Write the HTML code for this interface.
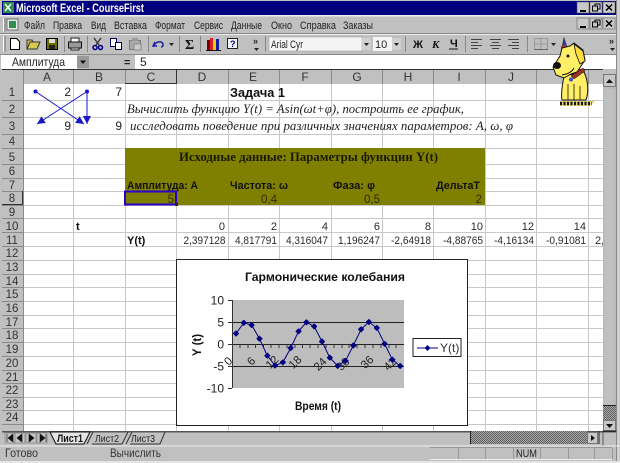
<!DOCTYPE html>
<html><head><meta charset="utf-8"><title>Microsoft Excel - CourseFirst</title>
<style>
html,body{margin:0;padding:0;background:#c0c0c0;width:620px;height:463px;overflow:hidden}
svg{display:block;font-family:"Liberation Sans",sans-serif;filter:blur(.35px)}
.c{font-size:10px;fill:#2a2a2a}
.r{font-size:10px;fill:#2a2a2a;text-anchor:end}
.b{font-size:11px;font-weight:bold;fill:#111}
.h{font-size:12px;fill:#333;text-anchor:middle}
.n{font-size:11.5px;fill:#333;text-anchor:middle}
.m{font-size:11px;fill:#222}
.s{font-family:"Liberation Serif",serif;font-style:italic;font-size:13px;fill:#222}
.t{font-size:12px;fill:#222;text-anchor:end}
</style></head><body>
<svg width="620" height="463" viewBox="0 0 620 463" xmlns="http://www.w3.org/2000/svg">
<defs>
<marker id="dot" markerWidth="6" markerHeight="6" refX="3" refY="3" markerUnits="userSpaceOnUse"><path d="M3 .3L5.700 3 3 5.700 .3 3z" fill="#000080" stroke="#000080" stroke-width=".8"/></marker>
<marker id="arr" markerWidth="10" markerHeight="10" refX="8" refY="4" orient="auto" markerUnits="userSpaceOnUse"><path d="M0 0L8 4 0 8z" fill="#1818c8"/></marker>
<pattern id="dith" width="2" height="2" patternUnits="userSpaceOnUse"><rect width="2" height="2" fill="#a8a8a8"/><rect width="1" height="1" fill="#606060"/><rect x="1" y="1" width="1" height="1" fill="#606060"/></pattern>
</defs>
<rect width="620" height="463" fill="#c0c0c0"/>

<!-- Title bar -->
<rect x="2" y="1" width="614" height="14" fill="#000080"/>
<rect x="3" y="2" width="11" height="11" fill="#2f8f4f"/><path d="M5 4l6 7M11 4l-6 7" stroke="#fff" stroke-width="1.400"/>
<text x="16" y="12" font-size="12" font-weight="bold" fill="#fff" textLength="128" lengthAdjust="spacingAndGlyphs">Microsoft Excel - CourseFirst</text>
<g id="tb">
<rect x="577" y="2" width="12" height="11" fill="#c8c8c8" stroke="#555" stroke-width=".5"/><rect x="580" y="10" width="6" height="2" fill="#000"/>
<rect x="590" y="2" width="12" height="11" fill="#c8c8c8" stroke="#555" stroke-width=".5"/><path d="M592.500 6h5v5h-5zM595 6V4h5v5h-2" fill="none" stroke="#000"/>
<rect x="603" y="2" width="12" height="11" fill="#c8c8c8" stroke="#555" stroke-width=".5"/><path d="M606 4.500l6 6M612 4.500l-6 6" stroke="#000" stroke-width="1.500"/>
</g>
<rect x="0" y="15" width="620" height="1.500" fill="#eee"/>

<!-- Menu -->
<rect x="3" y="18" width="1" height="14" fill="#fff"/><rect x="4.500" y="18" width="1" height="14" fill="#777"/>
<rect x="7" y="19" width="11" height="11" fill="#e8e8e8" stroke="#444" stroke-width=".7"/><rect x="9" y="21" width="7" height="7" fill="#2f8f4f"/>
<text class="m" y="29" x="24" textLength="21" lengthAdjust="spacingAndGlyphs">Файл</text>
<text class="m" y="29" x="53" textLength="29" lengthAdjust="spacingAndGlyphs">Правка</text>
<text class="m" y="29" x="91" textLength="15" lengthAdjust="spacingAndGlyphs">Вид</text>
<text class="m" y="29" x="114" textLength="33" lengthAdjust="spacingAndGlyphs">Вставка</text>
<text class="m" y="29" x="155" textLength="30" lengthAdjust="spacingAndGlyphs">Формат</text>
<text class="m" y="29" x="194" textLength="29" lengthAdjust="spacingAndGlyphs">Сервис</text>
<text class="m" y="29" x="231" textLength="31" lengthAdjust="spacingAndGlyphs">Данные</text>
<text class="m" y="29" x="271" textLength="21" lengthAdjust="spacingAndGlyphs">Окно</text>
<text class="m" y="29" x="300" textLength="36" lengthAdjust="spacingAndGlyphs">Справка</text>
<text class="m" y="29" x="343" textLength="30" lengthAdjust="spacingAndGlyphs">Заказы</text>
<use href="#tb" y="16"/>
<rect x="0" y="33" width="620" height="1" fill="#888"/><rect x="0" y="34" width="620" height="1" fill="#eee"/>

<!-- Toolbar -->
<rect x="3" y="36" width="1" height="16" fill="#fff"/><rect x="4.500" y="36" width="1" height="16" fill="#777"/>
<path d="M10.500 38.500h6l3 3v8h-9z" fill="#fff" stroke="#000"/>
<path d="M27 49l3-7h10l-3 7zM27 49v-9h5l1 2" fill="#d8c850" stroke="#333"/>
<rect x="46.500" y="38.500" width="11" height="11" fill="#707000" stroke="#000"/><rect x="49" y="39" width="6" height="4" fill="#ddd"/><rect x="49" y="45" width="6" height="4" fill="#222"/>
<rect x="64" y="36" width="1" height="16" fill="#888"/>
<path d="M71 42v-4h8v4" fill="#fff" stroke="#222"/><rect x="68.500" y="42" width="13" height="6" fill="#999" stroke="#111"/><path d="M71 48h8v2h-8z" fill="#eee" stroke="#222"/>
<rect x="87" y="36" width="1" height="16" fill="#888"/>
<path d="M94 38l5 7M101 38l-5 7" stroke="#333" stroke-width="1.300"/><circle cx="95" cy="47.500" r="2" fill="none" stroke="#00008a" stroke-width="1.500"/><circle cx="100.500" cy="47.500" r="2" fill="none" stroke="#00008a" stroke-width="1.500"/>
<rect x="110.500" y="38.500" width="6" height="8" fill="#fff" stroke="#00005a"/><rect x="115.500" y="42.500" width="6" height="7" fill="#fff" stroke="#00005a"/>
<rect x="129.500" y="40.500" width="11" height="9" fill="#aaa" stroke="#777"/><rect x="132" y="38" width="6" height="3" fill="#999"/><rect x="134" y="44" width="7" height="6" fill="#ccc" stroke="#888"/>
<rect x="148" y="36" width="1" height="16" fill="#888"/>
<path d="M155 42l-2 4 4 0M154 45c3-4 8-4 9-1 .5 2-1 3-2 3" fill="none" stroke="#2020a0" stroke-width="1.500"/>
<path d="M169 43h5l-2.500 3z" fill="#222"/>
<rect x="179" y="36" width="1" height="16" fill="#888"/>
<text x="185" y="49" font-size="14" font-weight="bold" fill="#111" font-family="Liberation Serif">Σ</text>
<rect x="200" y="36" width="1" height="16" fill="#888"/>
<rect x="207" y="40" width="3" height="10" fill="#700"/><rect x="210" y="38" width="3" height="12" fill="#e02020"/><rect x="213" y="41" width="3" height="9" fill="#f0d000"/><rect x="216" y="39" width="3" height="11" fill="#1020a0"/><path d="M206 50.500h15" stroke="#111"/>
<rect x="227.500" y="38.500" width="10" height="10" fill="#f4f4f4" stroke="#222"/><text x="230" y="47" font-size="9" font-weight="bold" fill="#000080">?</text>
<text x="253" y="44" font-size="9" font-weight="bold" fill="#222">»</text><path d="M254 48h5l-2.500 3z" fill="#222"/>
<rect x="265" y="36" width="1" height="16" fill="#888"/>
<rect x="269" y="37" width="93" height="14" fill="#f4f4f4" stroke="#999" stroke-width=".5"/>
<text x="271" y="48" font-size="11" fill="#222" textLength="32" lengthAdjust="spacingAndGlyphs">Arial Cyr</text>
<rect x="362" y="38" width="9" height="12" fill="#d0d0d0"/><path d="M364 43h5l-2.500 3z" fill="#222"/>
<rect x="373" y="37" width="19" height="14" fill="#f4f4f4"/><text x="375" y="48" font-size="11" fill="#222">10</text>
<rect x="392" y="38" width="9" height="12" fill="#d0d0d0"/><path d="M394 43h5l-2.500 3z" fill="#222"/>
<rect x="405" y="36" width="1" height="16" fill="#888"/>
<text x="413" y="48" font-size="11" font-weight="bold" fill="#111">Ж</text>
<text x="432" y="48" font-size="11" font-weight="bold" font-style="italic" fill="#111" font-family="Liberation Serif">К</text>
<text x="450" y="47" font-size="11" font-weight="bold" fill="#111">Ч</text><rect x="449" y="48.500" width="9" height="1" fill="#111"/>
<rect x="465" y="36" width="1" height="16" fill="#888"/>
<path d="M471 39.500h11M471 42.500h7M471 45.500h11M471 48.500h7" stroke="#444"/>
<path d="M490 39.500h11M492 42.500h7M490 45.500h11M492 48.500h7" stroke="#444"/>
<path d="M508 39.500h11M512 42.500h7M508 45.500h11M512 48.500h7" stroke="#444"/>
<rect x="527" y="36" width="1" height="16" fill="#888"/>
<path d="M534.500 38.500h13v11h-13zM541 38v12M534 44h14" fill="none" stroke="#999"/><path d="M534 49.500h14" stroke="#666"/>
<path d="M551 43h5l-2.500 3z" fill="#222"/>
<text x="609" y="44" font-size="9" font-weight="bold" fill="#222">»</text><path d="M610 48h5l-2.500 3z" fill="#222"/>

<!-- Formula bar -->
<rect x="0" y="54" width="620" height="1" fill="#888"/>
<rect x="1" y="55" width="76" height="14" fill="#fff"/>
<text x="12" y="66" font-size="12" fill="#222" textLength="53" lengthAdjust="spacingAndGlyphs">Амплитуда</text>
<rect x="77" y="56" width="12" height="12" fill="#999"/><path d="M80 60.500h6l-3 3.500z" fill="#111"/>
<rect x="135" y="55" width="481" height="14" fill="#fff"/>
<text x="124" y="66" font-size="11" font-weight="bold" fill="#222">=</text>
<text x="140" y="66" font-size="12" fill="#222">5</text>

<!-- Sheet -->
<rect x="2" y="69" width="601" height="1.500" fill="#333"/>
<rect x="23" y="84" width="580" height="348" fill="#fff"/>
<rect x="2" y="70" width="601" height="14" fill="#c0c0c0"/>
<rect x="2" y="84" width="21" height="348" fill="#c0c0c0"/>
<path d="M73.500 84V432M125.500 84V432M176.500 84V432M228.500 84V432M279.500 84V432M331.500 84V432M382.500 84V432M433.500 84V432M485.500 84V432M536.500 84V432M588.500 84V432M23 100.500H603M23 117.500H603M23 134.500H603M23 148.500H603M23 164.500H603M23 178.500H603M23 191.500H603M23 205.500H603M23 218.500H603M23 232.500H603M23 246.500H603M23 260.500H603M23 274.500H603M23 287.500H603M23 301.500H603M23 315.500H603M23 328.500H603M23 342.500H603M23 356.500H603M23 370.500H603M23 383.500H603M23 397.500H603M23 410.500H603M23 424.500H603" stroke="#c8c8c8" stroke-width="1" fill="none"/>
<path d="M23.500 70V84M73.500 70V84M125.500 70V84M176.500 70V84M228.500 70V84M279.500 70V84M331.500 70V84M382.500 70V84M433.500 70V84M485.500 70V84M536.500 70V84M588.500 70V84M2 100.500H23M2 117.500H23M2 134.500H23M2 148.500H23M2 164.500H23M2 178.500H23M2 191.500H23M2 205.500H23M2 218.500H23M2 232.500H23M2 246.500H23M2 260.500H23M2 274.500H23M2 287.500H23M2 301.500H23M2 315.500H23M2 328.500H23M2 342.500H23M2 356.500H23M2 370.500H23M2 383.500H23M2 397.500H23M2 410.500H23M2 424.500H23M23.500 84V432" stroke="#8a8a8a" fill="none"/>
<path d="M125 83.500H177M176.500 70V84M2 204.500H23M22.500 191V205" stroke="#333" stroke-width="1" fill="none"/>
<text class="h" x="47" y="81">A</text><text class="h" x="99" y="81">B</text><text class="h" x="151" y="81">C</text><text class="h" x="202" y="81">D</text><text class="h" x="253" y="81">E</text><text class="h" x="305" y="81">F</text><text class="h" x="357" y="81">G</text><text class="h" x="408" y="81">H</text><text class="h" x="459" y="81">I</text><text class="h" x="511" y="81">J</text>
<g>
<text class="n" x="12" y="96">1</text><text class="n" x="12" y="113">2</text><text class="n" x="12" y="130">3</text><text class="n" x="12" y="145">4</text><text class="n" x="12" y="161">5</text><text class="n" x="12" y="175">6</text><text class="n" x="12" y="189">7</text><text class="n" x="12" y="202">8</text><text class="n" x="12" y="216">9</text><text class="n" x="12" y="230">10</text><text class="n" x="12" y="244">11</text><text class="n" x="12" y="257">12</text><text class="n" x="12" y="271">13</text><text class="n" x="12" y="285">14</text><text class="n" x="12" y="298">15</text><text class="n" x="12" y="312">16</text><text class="n" x="12" y="326">17</text><text class="n" x="12" y="339">18</text><text class="n" x="12" y="353">19</text><text class="n" x="12" y="367">20</text><text class="n" x="12" y="381">21</text><text class="n" x="12" y="394">22</text><text class="n" x="12" y="408">23</text><text class="n" x="12" y="421">24</text>
</g>

<!-- Olive block -->
<rect x="125" y="148" width="360" height="57" fill="#808000"/>
<text x="179" y="161" font-family="Liberation Serif" font-weight="bold" font-size="13" fill="#1a1a00" textLength="259" lengthAdjust="spacingAndGlyphs">Исходные данные: Параметры функции Y(t)</text>
<text class="b" x="127" y="189" textLength="71" lengthAdjust="spacingAndGlyphs">Амплитуда: А</text>
<text class="b" x="230" y="189" textLength="58" lengthAdjust="spacingAndGlyphs">Частота: ω</text>
<text class="b" x="333" y="189" textLength="42" lengthAdjust="spacingAndGlyphs">Фаза: φ</text>
<text class="b" x="436" y="189" textLength="44" lengthAdjust="spacingAndGlyphs">ДельтаТ</text>
<g font-size="11.500" text-anchor="end" fill="#2c2c00">
<text x="174" y="203">5</text><text x="277" y="203">0,4</text><text x="380" y="203">0,5</text><text x="482" y="203">2</text>
</g>
<rect x="125" y="191.500" width="51" height="13" fill="none" stroke="#2a00c8" stroke-width="2"/>
<rect x="175" y="203" width="3" height="3" fill="#222"/>

<!-- Cells -->
<text x="230" y="97" font-size="13" font-weight="bold" fill="#111" textLength="55" lengthAdjust="spacingAndGlyphs">Задача 1</text>
<text class="s" x="127" y="113" textLength="337" lengthAdjust="spacingAndGlyphs">Вычислить функцию Y(t) = Asin(ωt+φ), построить ее график,</text>
<text class="s" x="130" y="130" textLength="383" lengthAdjust="spacingAndGlyphs">исследовать поведение при различных значениях параметров: A, ω, φ</text>
<text class="t" x="71" y="96">2</text><text class="t" x="122" y="96">7</text><text class="t" x="71" y="130">9</text><text class="t" x="122" y="130">9</text>
<g stroke="#1818c8" stroke-width="1" fill="none">
<path d="M35.500 91.500L84 124" marker-end="url(#arr)"/><path d="M87 91.500L37 124" marker-end="url(#arr)"/><path d="M87 91.500V124" marker-end="url(#arr)"/>
</g>
<circle cx="35.500" cy="91.500" r="2" fill="#1818c8"/><circle cx="87" cy="91.500" r="2" fill="#1818c8"/>
<text class="b" x="76" y="230">t</text>
<g font-size="11" text-anchor="end" fill="#2a2a2a">
<text x="225" y="230">0</text><text x="277" y="230">2</text><text x="328" y="230">4</text><text x="380" y="230">6</text><text x="431" y="230">8</text><text x="483" y="230">10</text><text x="534" y="230">12</text><text x="586" y="230">14</text>
</g>
<text class="b" x="127" y="244">Y(t)</text>
<text class="r" x="225.500" y="244" textLength="42" lengthAdjust="spacingAndGlyphs" style="font-size:11px">2,397128</text><text class="r" x="277" y="244" textLength="42" lengthAdjust="spacingAndGlyphs" style="font-size:11px">4,817791</text><text class="r" x="328" y="244" textLength="42" lengthAdjust="spacingAndGlyphs" style="font-size:11px">4,316047</text><text class="r" x="380" y="244" textLength="42" lengthAdjust="spacingAndGlyphs" style="font-size:11px">1,196247</text><text class="r" x="431" y="244" textLength="40" lengthAdjust="spacingAndGlyphs" style="font-size:11px">-2,64918</text><text class="r" x="483" y="244" textLength="40" lengthAdjust="spacingAndGlyphs" style="font-size:11px">-4,88765</text><text class="r" x="534" y="244" textLength="40" lengthAdjust="spacingAndGlyphs" style="font-size:11px">-4,16134</text><text class="r" x="586" y="244" textLength="40" lengthAdjust="spacingAndGlyphs" style="font-size:11px">-0,91081</text>
<text class="c" x="595" y="244" style="font-size:11px">2,</text>

<!-- Chart -->
<rect x="176.500" y="259.500" width="291" height="166" fill="#fff" stroke="#222"/>
<text x="245" y="281" font-size="12" font-weight="bold" fill="#111" textLength="160" lengthAdjust="spacingAndGlyphs">Гармонические колебания</text>
<rect x="232" y="300" width="172" height="88" fill="#bdbdbd"/>
<path d="M232 322.500H404M232 344.500H404M232 366.500H404" stroke="#222"/>
<path d="M232.500 300V388M228 300.500H232M228 322.500H232M228 344.500H232M228 366.500H232M228 388.500H232M240 344V348M248 344V348M255.500 344V348M263.500 344V348M271 344V348M279 344V348M287 344V348M295 344V348M302.500 344V348M310 344V348M318 344V348M326 344V348M334 344V348M342 344V348M349 344V348M357 344V348M365 344V348M373 344V348M381 344V348M389 344V348M396 344V348" stroke="#333" fill="none"/>
<g font-size="12" fill="#222" text-anchor="end"><text x="224" y="304.500">10</text><text x="224" y="326.500">5</text><text x="224" y="348.500">0</text><text x="224" y="370.500">-5</text><text x="224" y="392.500">-10</text></g>
<g font-size="11.500" fill="#222" text-anchor="middle">
<text transform="rotate(-45 228 361)" x="228" y="365">0</text>
<text transform="rotate(-45 251 361)" x="251" y="365">6</text>
<text transform="rotate(-45 272 362)" x="272" y="366">12</text>
<text transform="rotate(-45 295 362)" x="295" y="366">18</text>
<text transform="rotate(-45 320 364)" x="320" y="368">24</text>
<text transform="rotate(-45 343 364)" x="343" y="368">30</text>
<text transform="rotate(-45 367 362)" x="367" y="366">36</text>
<text transform="rotate(-45 390 364)" x="390" y="368">42</text>
</g>
<polyline fill="none" stroke="#000080" stroke-width="1" marker-start="url(#dot)" marker-mid="url(#dot)" marker-end="url(#dot)" points="236,333.500 243.800,322.800 251.600,325 259.500,338.700 267.300,355.700 275.100,365.500 282.900,362.300 290.700,348 298.600,331.300 306.400,322.300 314.200,326.400 322,341.500 329.800,357.700 337.700,365.900 345.500,360.800 353.300,345.500 361.100,329.300 368.900,322 376.800,327.900 384.600,343.800 392.400,359.700 400.200,366"/>
<text transform="rotate(-90 201 345)" x="201" y="345" text-anchor="middle" font-size="11.500" font-weight="bold" fill="#111">Y (t)</text>
<text x="295" y="410" font-size="11.500" font-weight="bold" fill="#111" textLength="46" lengthAdjust="spacingAndGlyphs">Время (t)</text>
<rect x="413" y="338.500" width="48" height="18" fill="#fff" stroke="#222"/>
<path d="M417 348H438" stroke="#000080"/><path d="M427.500 345L430.500 348 427.500 351 424.500 348z" fill="#000080"/>
<text x="440" y="352" font-size="12" fill="#333">Y(t)</text>

<!-- Dog -->
<path d="M561 52L564 38 568 50z" fill="#3a3ab0" stroke="#222" stroke-width=".6"/><path d="M561 46l5-1 1 4-6 1z" fill="#c03030"/>
<path d="M564 76C562 86 561 95 562 100H586C589 92 588 80 584 72z" fill="#ffee66" stroke="#111" stroke-width="1"/>
<path d="M568 84V100M574 84V100M580 86V100" stroke="#111" stroke-width=".8" fill="none"/>
<path d="M560 101H595L590 106H561z" fill="#e8d878"/>
<path d="M560 103.500H592" stroke="#111" stroke-width="3.500" stroke-dasharray="2 1.500"/>
<path d="M553 67L560 56 562 48 570 46 574 43 583 50 585 60 581 66 577 72 571 74 564 78 556 75z" fill="#ffee66" stroke="#111" stroke-width="1"/>
<path d="M574 44L583 51 585 61 580 64 576 54z" fill="#ffdc40" stroke="#111" stroke-width=".8"/>
<ellipse cx="557" cy="65.500" rx="4" ry="3.500" fill="#111"/><circle cx="568" cy="56" r="1.500" fill="#111"/>
<path d="M562 75C568 74 572 72 574 68" fill="none" stroke="#111"/>
<path d="M571 76L583 68 585 71 574 79z" fill="#a03020" stroke="#111" stroke-width=".5"/>
<circle cx="571" cy="79.500" r="2" fill="#3050d0"/>

<!-- Vertical scrollbar -->
<rect x="603" y="70" width="14" height="361" fill="#c0c0c0"/>
<rect x="603.500" y="74.500" width="12" height="12" fill="#c8c8c8" stroke="#777"/><path d="M606 83h7l-3.500-4z" fill="#111"/>
<rect x="604" y="88" width="11" height="317" fill="#c0c0c0" stroke="#aaa" stroke-width=".5"/>
<rect x="603" y="405" width="13" height="15" fill="url(#dith)"/><rect x="603" y="405" width="13" height="1" fill="#222"/>
<rect x="603.500" y="420.500" width="12" height="10" fill="#c8c8c8" stroke="#777"/><path d="M606 424h7l-3.500 4z" fill="#111"/>
<rect x="616" y="0" width="1" height="463" fill="#888"/><rect x="617" y="0" width="3" height="463" fill="#d0d0d0"/>

<!-- Tabs row -->
<rect x="0" y="431" width="616" height="15" fill="#c0c0c0"/>
<rect x="2" y="431" width="601" height="1.500" fill="#555"/>
<g fill="#c4c4c4" stroke="#777" stroke-width=".6">
<rect x="5" y="433" width="10" height="10"/><rect x="15" y="433" width="10" height="10"/><rect x="26" y="433" width="10" height="10"/><rect x="37" y="433" width="10" height="10"/>
</g>
<path d="M7 434v8M13 434l-5 4 5 4zM22 434l-5 4 5 4zM29 434l5 4-5 4zM40 434l5 4-5 4zM46 434v8" fill="#111" stroke="#111" stroke-width=".6"/>
<path d="M50 432L56 444H84L90 432z" fill="#e4e4e4" stroke="#111"/>
<text x="57" y="442" font-size="11" font-weight="bold" fill="#111" textLength="26" lengthAdjust="spacingAndGlyphs">Лист1</text>
<path d="M87 444L93 432M122 444L128 432M92 444H122M126 444L132 432M160 444L165 432M130 444H160" stroke="#333" fill="none"/>
<text x="95" y="442" font-size="10.500" fill="#222" textLength="24" lengthAdjust="spacingAndGlyphs">Лист2</text>
<text x="131" y="442" font-size="10.500" fill="#222" textLength="24" lengthAdjust="spacingAndGlyphs">Лист3</text>
<rect x="470" y="431" width="117" height="13" fill="url(#dith)"/><rect x="470" y="431" width="1" height="13" fill="#222"/>
<rect x="587.500" y="432.500" width="10" height="11" fill="#c8c8c8" stroke="#777"/><path d="M591 435v6l4-3z" fill="#111"/>
<path d="M599 431v13" stroke="#222"/><path d="M603 431h13v1h-13zM603 431v15" stroke="#333" stroke-width=".7"/>

<!-- Status bar -->
<rect x="0" y="445.500" width="620" height="1" fill="#eee"/>
<text x="5" y="457" font-size="12" fill="#333" textLength="33" lengthAdjust="spacingAndGlyphs">Готово</text>
<text x="110" y="457" font-size="12" fill="#333" textLength="51" lengthAdjust="spacingAndGlyphs">Вычислить</text>
<path d="M458.500 448V459M485.500 448V459M513.500 448V459M540.500 448V459M568.500 448V459M594.500 448V459M612.500 448V459M430 447.500H612" stroke="#999" fill="none"/>
<path d="M430 459.500H612" stroke="#eee"/>
<text x="516" y="457" font-size="11" fill="#222" textLength="21" lengthAdjust="spacingAndGlyphs">NUM</text>
<rect x="0" y="461" width="620" height="2" fill="#e4e4e4"/>
</svg>
</body></html>
